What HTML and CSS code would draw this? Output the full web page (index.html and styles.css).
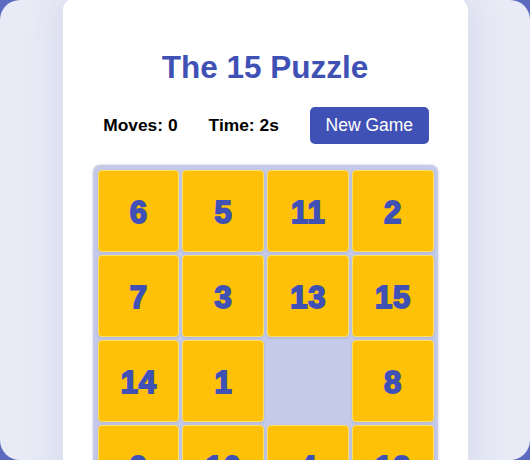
FILE: index.html
```html
<!DOCTYPE html>
<html>
<head>
<meta charset="utf-8">
<link rel="stylesheet" href="styles.css">
</head>
<body>
<div class="app">
  <div class="card">
    <h1 class="title">The 15 Puzzle</h1>
    <div class="stats">
      <span class="stat">Moves: 0</span>
      <span class="stat">Time: 2s</span>
      <button class="btn">New Game</button>
    </div>
    <div class="board">
      <div class="tile">6</div>
      <div class="tile">5</div>
      <div class="tile">11</div>
      <div class="tile">2</div>
      <div class="tile">7</div>
      <div class="tile">3</div>
      <div class="tile">13</div>
      <div class="tile">15</div>
      <div class="tile">14</div>
      <div class="tile">1</div>
      <div class="tile empty"></div>
      <div class="tile">8</div>
      <div class="tile">9</div>
      <div class="tile">10</div>
      <div class="tile">4</div>
      <div class="tile">12</div>
    </div>
  </div>
</div>
</body>
</html>
```

FILE: styles.css
```css
html, body {
  margin: 0;
  padding: 0;
  background: #5c6bc0;
  font-family: "Liberation Sans", Arial, sans-serif;
  overflow: hidden;
}
.app {
  height: 460px;
  background: #e8eaf6;
  border-radius: 20px;
  display: flex;
  justify-content: center;
  overflow: hidden;
}
.card {
  width: 405px;
  height: 600px;
  flex: none;
  margin-top: -3px;
  background: #ffffff;
  border-radius: 14px;
  box-shadow: 0 0 40px rgba(60, 70, 140, 0.12);
  box-sizing: border-box;
  padding-top: 52px;
  display: flex;
  flex-direction: column;
  align-items: center;
}
.title {
  margin: 0;
  font-size: 31.5px;
  line-height: 36px;
  font-weight: bold;
  color: #3f51b5;
}
.stats {
  margin-top: 22px;
  display: flex;
  align-items: center;
  gap: 31px;
  padding-left: 2px;
}
.stat {
  font-size: 17.4px;
  font-weight: bold;
  color: #000;
}
.btn {
  font-family: "Liberation Sans", Arial, sans-serif;
  font-size: 17.5px;
  color: #ffffff;
  background: #3f51b5;
  border: none;
  border-radius: 5px;
  width: 119px;
  height: 37px;
  padding: 0;
}
.board {
  margin-top: 21px;
  width: 345px;
  box-sizing: border-box;
  padding: 5px 4px 5px 5px;
  background: #c5cae9;
  border-radius: 7px;
  box-shadow: 0 0 3px rgba(60, 70, 140, 0.25);
  display: grid;
  grid-template-columns: repeat(4, 1fr);
  grid-auto-rows: 82px;
  gap: 3px;
}
.tile {
  background: #ffc107;
  border: 1px solid #ffe066;
  border-radius: 4px;
  box-shadow: 0 1px 3px rgba(0, 0, 0, 0.12);
  display: flex;
  align-items: center;
  justify-content: center;
  font-size: 31px;
  font-weight: bold;
  letter-spacing: 1px;
  -webkit-text-stroke: 1.8px #3f51b5;
  color: #3f51b5;
  padding-top: 3px;
  padding-left: 1px;
  box-sizing: border-box;
}
.tile.empty {
  background: transparent;
  border-color: transparent;
  box-shadow: none;
}
```
